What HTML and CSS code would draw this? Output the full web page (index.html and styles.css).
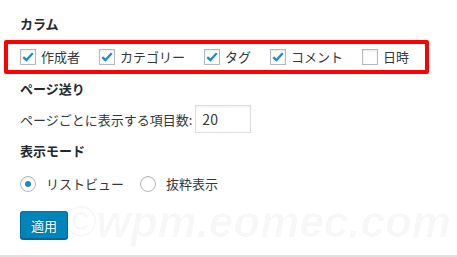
FILE: index.html
```html
<!DOCTYPE html>
<html lang="ja">
<head>
  <meta charset="UTF-8" />
  <title>表示オプション</title>
  <link rel="stylesheet" href="styles.css">
</head>
<body>

  <!-- 表示オプション -->
  <div class="screen-options">
    <div class="group-title">カラム</div>
    <div class="columns-row">
      <label class="check"><span class="box"><svg viewBox="0 0 16 16"><path d="M2.6 8.2 L6.2 11.6 L13.4 3.6" /></svg></span>作成者</label>
      <label class="check"><span class="box"><svg viewBox="0 0 16 16"><path d="M2.6 8.2 L6.2 11.6 L13.4 3.6" /></svg></span>カテゴリー</label>
      <label class="check"><span class="box"><svg viewBox="0 0 16 16"><path d="M2.6 8.2 L6.2 11.6 L13.4 3.6" /></svg></span>タグ</label>
      <label class="check"><span class="box"><svg viewBox="0 0 16 16"><path d="M2.6 8.2 L6.2 11.6 L13.4 3.6" /></svg></span>コメント</label>
      <label class="check"><span class="box"></span>日時</label>
    </div>

    <div class="group-title paging-title">ページ送り</div>
    <div class="per-page">
      <span>ページごとに表示する項目数:</span>
      <span class="num-input">20</span>
    </div>

    <div class="group-title mode-title">表示モード</div>
    <div class="modes">
      <label class="radio"><span class="circle on"></span>リストビュー</label>
      <label class="radio"><span class="circle"></span>抜粋表示</label>
    </div>

    <button class="apply">適用</button>

    <div class="watermark">©wpm.eomec.com</div>
  </div>

</body>
</html>
```

FILE: styles.css
```css
body {
  margin: 0;
  background: #fff;
  font-family: "Noto Sans CJK JP", "Noto Sans", sans-serif;
  font-size: 13px;
  color: #32373c;
}
.screen-options {
  position: relative;
  height: 257px;
  padding: 14px 0 0 20px;
  box-sizing: border-box;
  border-bottom: 2px solid #e1e1e1;
}
.group-title {
  font-weight: 600;
  color: #23282d;
  line-height: 20px;
}
.columns-row {
  display: flex;
  align-items: center;
  gap: 19px;
  width: 425px;
  box-sizing: border-box;
  margin: 6px 0 0 -16px;
  padding: 4px 12px;
  border: 4px solid #ff0000;
  border-radius: 2px;
  line-height: 18px;
}
.check {
  display: flex;
  align-items: center;
  gap: 5px;
}
.box {
  width: 16px;
  height: 16px;
  box-sizing: border-box;
  border: 1px solid #b4b9be;
  background: #fff;
  box-shadow: inset 0 1px 2px rgba(0,0,0,0.1);
  display: flex;
  align-items: center;
  justify-content: center;
}
.box svg {
  width: 14px;
  height: 14px;
}
.box path {
  fill: none;
  stroke: #1e8cbe;
  stroke-width: 2.6;
}
.paging-title {
  margin-top: 5px;
}
.per-page {
  display: flex;
  align-items: center;
  gap: 3px;
  margin-top: 6px;
}
.num-input {
  width: 56px;
  height: 28px;
  box-sizing: border-box;
  border: 1px solid #ddd;
  box-shadow: inset 0 1px 2px rgba(0,0,0,0.07);
  padding-left: 6px;
  line-height: 26px;
  font-size: 14px;
  color: #32373c;
}
.mode-title {
  margin-top: 8px;
}
.modes {
  display: flex;
  align-items: center;
  gap: 16px;
  margin-top: 13px;
  line-height: 20px;
}
.radio {
  display: flex;
  align-items: center;
  gap: 10px;
}
.circle {
  width: 16px;
  height: 16px;
  box-sizing: border-box;
  border: 1px solid #b4b9be;
  border-radius: 50%;
  background: #fff;
  box-shadow: inset 0 1px 2px rgba(0,0,0,0.1);
  display: flex;
  align-items: center;
  justify-content: center;
}
.circle.on::after {
  content: "";
  width: 6px;
  height: 6px;
  border-radius: 50%;
  background: #1e8cbe;
}
.apply {
  display: block;
  margin-top: 17px;
  height: 28px;
  padding: 0 10px;
  font-family: inherit;
  font-size: 13px;
  color: #fff;
  background: #0085ba;
  border: 1px solid #0073aa;
  border-color: #0073aa #006799 #006799;
  border-radius: 3px;
  box-shadow: 0 1px 0 #006799;
  text-shadow: 0 -1px 1px #006799;
  position: relative;
  z-index: 1;
}
.watermark {
  position: absolute;
  left: 64px;
  top: 198px;
  font-family: "Liberation Sans", Arial, sans-serif;
  font-weight: bold;
  font-style: italic;
  font-size: 44px;
  line-height: 48px;
  color: rgba(0,0,0,0.03);
  white-space: nowrap;
}
```
